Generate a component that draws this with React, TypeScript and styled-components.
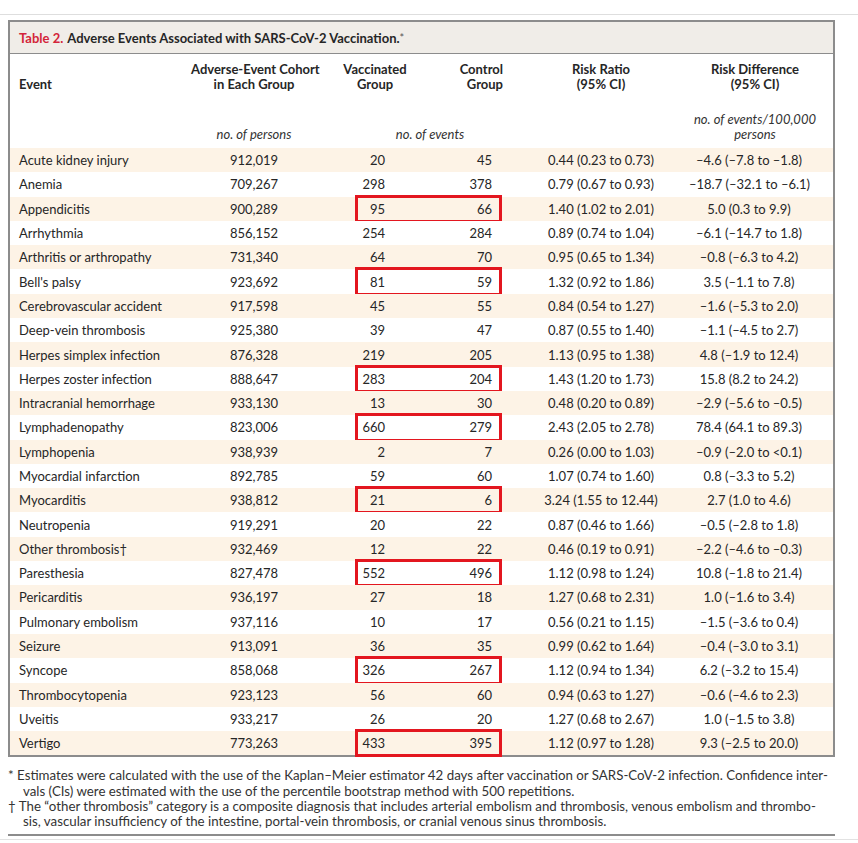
import React from "react";
import styled, { createGlobalStyle } from "styled-components";

const Global = createGlobalStyle`
  html, body { margin: 0; padding: 0; background: #fff; }
  body { font-family: Lato, "Open Sans", "Liberation Sans", sans-serif; color: #262626; }
`;

const COLS = "181px 126px 98px 98px 176px 146px";

const Page = styled.div`
  width: 858px;
  padding-top: 14px;
`;

const TopRule = styled.div`
  height: 1px;
  background: #dedede;
  margin-bottom: 5px;
`;

const Frame = styled.div`
  margin-left: 8px;
  width: 827px;
  box-sizing: border-box;
  border: 2px solid #8c8c8c;
`;

const TitleBar = styled.div`
  height: 31px;
  background: #f0ede8;
  border-bottom: 1px solid #8c8c8c;
  display: flex;
  align-items: center;
  padding-left: 9px;
  font-size: 13px;
  font-weight: 700;
  color: #262626;
`;

const TitleNum = styled.span`
  color: #d3263a;
  margin-right: 4px;
`;

const Sup = styled.span`
  font-weight: 400;
  font-size: 11px;
  vertical-align: 3px;
  color: #555;
`;

const Head = styled.div`
  padding: 7px 0 6px;
  display: grid;
  grid-template-columns: ${COLS};
  grid-template-rows: 31px 30px;
  row-gap: 20px;
  align-items: end;
  font-size: 13px;
  line-height: 15px;
`;

const HCell = styled.div<{ $align?: string; $pl?: number; $pr?: number }>`
  font-weight: 700;
  white-space: nowrap;
  text-align: ${(p) => p.$align || "center"};
  padding-left: ${(p) => p.$pl || 0}px;
  padding-right: ${(p) => p.$pr || 0}px;
`;

const Unit = styled.div<{ $pl?: number; $pr?: number; $col?: string }>`
  font-style: italic;
  white-space: nowrap;
  text-align: center;
  padding-left: ${(p) => p.$pl || 0}px;
  padding-right: ${(p) => p.$pr || 0}px;
  ${(p) => (p.$col ? `grid-column: ${p.$col};` : "")}
  color: #333;
`;

const Row = styled.div<{ $tint: boolean }>`
  position: relative;
  display: grid;
  grid-template-columns: ${COLS};
  align-items: center;
  height: 24.3px;
  background: ${(p) => (p.$tint ? "#fdf3e6" : "#fff")};
  font-size: 13px;
`;

const Cell = styled.div<{ $align?: string; $pl?: number; $pr?: number }>`
  text-align: ${(p) => p.$align || "center"};
  padding-left: ${(p) => p.$pl || 0}px;
  padding-right: ${(p) => p.$pr || 0}px;
  white-space: nowrap;
`;

const Mark = styled.div`
  position: absolute;
  left: 345px;
  width: 147px;
  top: -2px;
  bottom: -2px;
  box-sizing: border-box;
  border: 3.5px solid #e3161f;
  pointer-events: none;
`;

const Notes = styled.div`
  margin-left: 8px;
  margin-top: 11px;
  font-size: 13.3px;
  line-height: 15.2px;
  color: #333;
`;

const Note = styled.div`
  padding-left: 15px;
  text-indent: -15px;
  white-space: nowrap;
`;

const BottomRule = styled.div`
  margin: 5px 0 0 8px;
  width: 827px;
  height: 2px;
  background: #8c8c8c;
`;

const FaintRule = styled.div`
  margin-top: 3px;
  height: 1px;
  background: #e2e2e2;
`;

type R = [string, string, string, string, string, string, boolean?];

const rows: R[] = [
  ["Acute kidney injury", "912,019", "20", "45", "0.44 (0.23 to 0.73)", "–4.6 (–7.8 to –1.8)"],
  ["Anemia", "709,267", "298", "378", "0.79 (0.67 to 0.93)", "–18.7 (–32.1 to –6.1)"],
  ["Appendicitis", "900,289", "95", "66", "1.40 (1.02 to 2.01)", "5.0 (0.3 to 9.9)", true],
  ["Arrhythmia", "856,152", "254", "284", "0.89 (0.74 to 1.04)", "–6.1 (–14.7 to 1.8)"],
  ["Arthritis or arthropathy", "731,340", "64", "70", "0.95 (0.65 to 1.34)", "–0.8 (–6.3 to 4.2)"],
  ["Bell's palsy", "923,692", "81", "59", "1.32 (0.92 to 1.86)", "3.5 (–1.1 to 7.8)", true],
  ["Cerebrovascular accident", "917,598", "45", "55", "0.84 (0.54 to 1.27)", "–1.6 (–5.3 to 2.0)"],
  ["Deep-vein thrombosis", "925,380", "39", "47", "0.87 (0.55 to 1.40)", "–1.1 (–4.5 to 2.7)"],
  ["Herpes simplex infection", "876,328", "219", "205", "1.13 (0.95 to 1.38)", "4.8 (–1.9 to 12.4)"],
  ["Herpes zoster infection", "888,647", "283", "204", "1.43 (1.20 to 1.73)", "15.8 (8.2 to 24.2)", true],
  ["Intracranial hemorrhage", "933,130", "13", "30", "0.48 (0.20 to 0.89)", "–2.9 (–5.6 to –0.5)"],
  ["Lymphadenopathy", "823,006", "660", "279", "2.43 (2.05 to 2.78)", "78.4 (64.1 to 89.3)", true],
  ["Lymphopenia", "938,939", "2", "7", "0.26 (0.00 to 1.03)", "–0.9 (–2.0 to <0.1)"],
  ["Myocardial infarction", "892,785", "59", "60", "1.07 (0.74 to 1.60)", "0.8 (–3.3 to 5.2)"],
  ["Myocarditis", "938,812", "21", "6", "3.24 (1.55 to 12.44)", "2.7 (1.0 to 4.6)", true],
  ["Neutropenia", "919,291", "20", "22", "0.87 (0.46 to 1.66)", "–0.5 (–2.8 to 1.8)"],
  ["Other thrombosis†", "932,469", "12", "22", "0.46 (0.19 to 0.91)", "–2.2 (–4.6 to –0.3)"],
  ["Paresthesia", "827,478", "552", "496", "1.12 (0.98 to 1.24)", "10.8 (–1.8 to 21.4)", true],
  ["Pericarditis", "936,197", "27", "18", "1.27 (0.68 to 2.31)", "1.0 (–1.6 to 3.4)"],
  ["Pulmonary embolism", "937,116", "10", "17", "0.56 (0.21 to 1.15)", "–1.5 (–3.6 to 0.4)"],
  ["Seizure", "913,091", "36", "35", "0.99 (0.62 to 1.64)", "–0.4 (–3.0 to 3.1)"],
  ["Syncope", "858,068", "326", "267", "1.12 (0.94 to 1.34)", "6.2 (–3.2 to 15.4)", true],
  ["Thrombocytopenia", "923,123", "56", "60", "0.94 (0.63 to 1.27)", "–0.6 (–4.6 to 2.3)"],
  ["Uveitis", "933,217", "26", "20", "1.27 (0.68 to 2.67)", "1.0 (–1.5 to 3.8)"],
  ["Vertigo", "773,263", "433", "395", "1.12 (0.97 to 1.28)", "9.3 (–2.5 to 20.0)", true],
];

export default function App() {
  return (
    <Page>
      <Global />
      <TopRule />
      <Frame>
        <TitleBar>
          <TitleNum>Table 2.</TitleNum>
          Adverse Events Associated with SARS-CoV-2 Vaccination.<Sup>*</Sup>
        </TitleBar>
        <Head>
          <HCell $align="left" $pl={9}>Event</HCell>
          <HCell>Adverse-Event Cohort<br />in Each Group</HCell>
          <HCell $pl={18}>Vaccinated<br />Group</HCell>
          <HCell $align="right" $pr={10}>Control<br />Group</HCell>
          <HCell>Risk Ratio<br />(95% CI)</HCell>
          <HCell $pr={14}>Risk Difference<br />(95% CI)</HCell>
          <Unit $col="2">no. of persons</Unit>
          <Unit $col="3 / span 2" $pl={30}>no. of events</Unit>
          <Unit $col="6" $pr={14}>no. of events/100,000<br />persons</Unit>
        </Head>
        {rows.map((r, i) => (
          <Row key={r[0]} $tint={i % 2 === 0}>
            <Cell $align="left" $pl={9}>{r[0]}</Cell>
            <Cell>{r[1]}</Cell>
            <Cell $align="right" $pr={30}>{r[2]}</Cell>
            <Cell $align="right" $pr={21}>{r[3]}</Cell>
            <Cell>{r[4]}</Cell>
            <Cell $pr={26}>{r[5]}</Cell>
            {r[6] && <Mark />}
          </Row>
        ))}
      </Frame>
      <Notes>
        <Note>
          * Estimates were calculated with the use of the Kaplan–Meier estimator 42 days after vaccination or SARS-CoV-2 infection. Confidence inter-
          <br />vals (CIs) were estimated with the use of the percentile bootstrap method with 500 repetitions.
        </Note>
        <Note>
          † The “other thrombosis” category is a composite diagnosis that includes arterial embolism and thrombosis, venous embolism and thrombo-
          <br />sis, vascular insufficiency of the intestine, portal-vein thrombosis, or cranial venous sinus thrombosis.
        </Note>
      </Notes>
      <BottomRule />
      <FaintRule />
    </Page>
  );
}
